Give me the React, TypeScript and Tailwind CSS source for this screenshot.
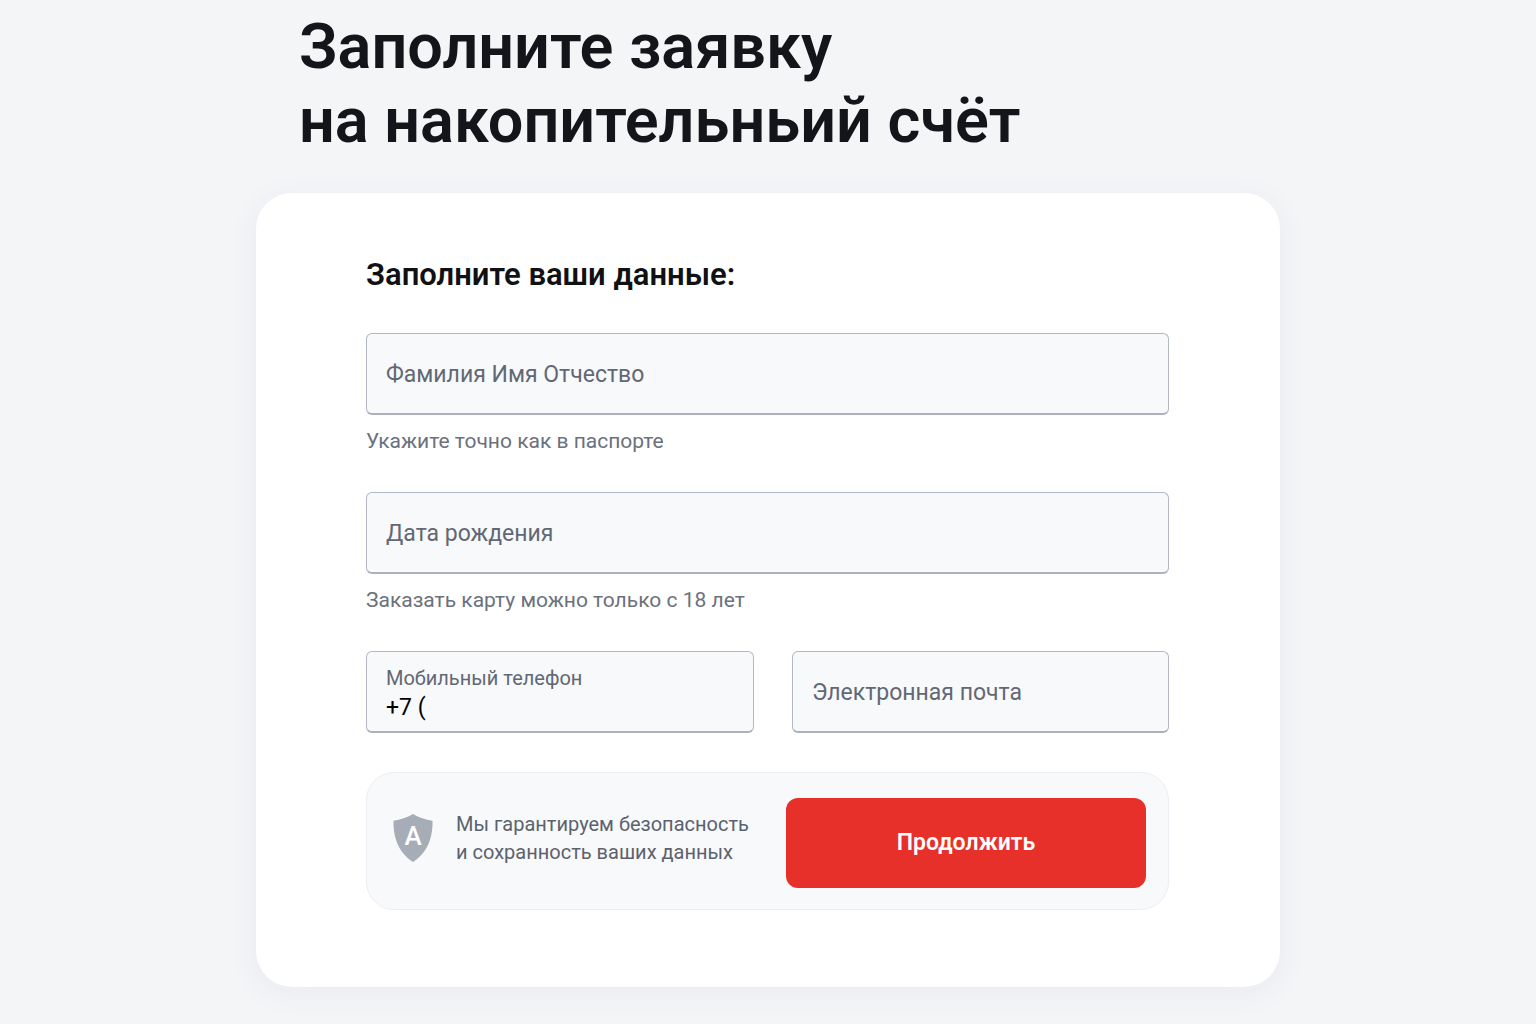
import { useState } from 'react'
import type { FormEvent } from 'react'

const fieldBox =
  'w-full h-[82px] rounded-md border border-b-2 border-[#b3b7c5] border-b-[#acb1bc] bg-[#f8f9fb] px-[19px] focus-within:border-[#7d8596]'

interface FieldProps {
  id: string
  label: string
  type?: string
  hint?: string
}

function Field({ id, label, type = 'text', hint }: FieldProps) {
  return (
    <div>
      <input
        id={id}
        name={id}
        type={type}
        aria-label={label}
        placeholder={label}
        aria-describedby={hint ? `${id}-hint` : undefined}
        className={`${fieldBox} block pt-0.5 text-[23px] text-black placeholder:text-[#626873] outline-none`}
      />
      {hint && (
        <p id={`${id}-hint`} className="mt-2.5 text-[21px] leading-8 text-[#6b717d]">
          {hint}
        </p>
      )}
    </div>
  )
}

function PhoneField() {
  const [phone, setPhone] = useState('+7 (')

  return (
    <div className={`${fieldBox} flex flex-col justify-center`}>
      <label htmlFor="phone" className="text-xl leading-8 text-[#626873]">
        Мобильный телефон
      </label>
      <input
        id="phone"
        name="phone"
        type="tel"
        value={phone}
        onChange={(e) => setPhone(e.target.value)}
        className="block w-full h-7 text-[23px] leading-7 text-black outline-none"
      />
    </div>
  )
}

function ShieldIcon() {
  return (
    <svg viewBox="0 0 40 48" className="w-10 h-12 shrink-0" aria-hidden="true">
      <path
        d="M20 0C14 3.600 7.500 5.800 0.500 6.800C0.300 13 1 20 3.200 26.500C6.300 35.500 12 42.800 20 48C28 42.800 33.700 35.500 36.800 26.500C39 20 39.700 13 39.500 6.800C32.500 5.800 26 3.600 20 0Z"
        fill="#a7adb6"
      />
      <text x="20" y="31" textAnchor="middle" fontSize="26" fontWeight="500" fill="#fff">
        A
      </text>
    </svg>
  )
}

export default function App() {
  const handleSubmit = (e: FormEvent) => e.preventDefault()

  return (
    <div className="min-h-screen bg-[#f4f5f7] px-6 pt-2.5 pb-9 font-['Roboto','Noto_Sans',sans-serif]">
      <main className="mx-auto max-w-5xl">
        <h1 className="pl-[43px] text-[63px] leading-[74px] font-semibold text-[#14151a]">
          Заполните заявку
          <br />
          на накопительньий счёт
        </h1>

        <form
          onSubmit={handleSubmit}
          className="mt-[35px] rounded-[36px] bg-white pl-[110px] pr-[111px] pt-16 pb-[77px] shadow-[0_6px_32px_rgba(70,60,120,0.06)]"
        >
          <h2 className="text-[31px] leading-9 font-semibold text-[#101114]">Заполните ваши данные:</h2>

          <div className="mt-10 flex flex-col gap-[35px]">
            <Field id="fullName" label="Фамилия Имя Отчество" hint="Укажите точно как в паспорте" />
            <Field id="birthDate" label="Дата рождения" hint="Заказать карту можно только с 18 лет" />
            <div className="grid grid-cols-[388fr_377fr] gap-[38px]">
              <PhoneField />
              <Field id="email" type="email" label="Электронная почта" />
            </div>
          </div>

          <div className="mt-[39px] flex items-center justify-between rounded-[28px] border border-[#eceef3] bg-[#f8f9fb] pt-[25px] pr-[22px] pb-[21px] pl-[26px]">
            <div className="flex items-center gap-[23px] pb-2.5">
              <ShieldIcon />
              <p className="text-xl leading-7 text-[#5c626d]">
                Мы гарантируем безопасность
                <br />
                и сохранность ваших данных
              </p>
            </div>
            <button
              type="submit"
              className="h-[90px] w-[360px] rounded-xl bg-[#e7302a] text-[23px] font-semibold text-white hover:bg-[#d12822]"
            >
              Продолжить
            </button>
          </div>
        </form>
      </main>
    </div>
  )
}
